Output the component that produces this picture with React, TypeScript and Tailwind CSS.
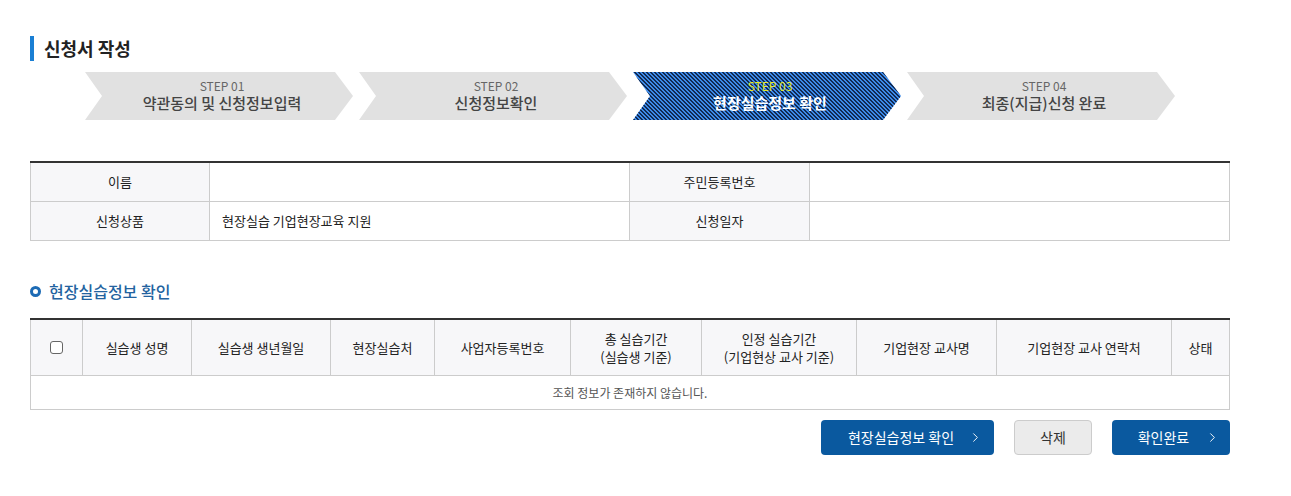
import { ChevronRight } from "lucide-react";

const steps = [
  { no: "STEP 01", label: "약관동의 및 신청정보입력", active: false },
  { no: "STEP 02", label: "신청정보확인", active: false },
  { no: "STEP 03", label: "현장실습정보 확인", active: true },
  { no: "STEP 04", label: "최종(지급)신청 완료", active: false },
];

const columns = [
  { w: "w-[52px]", label: null },
  { w: "w-[109px]", label: ["실습생 성명"] },
  { w: "w-[139px]", label: ["실습생 생년월일"] },
  { w: "w-[104px]", label: ["현장실습처"] },
  { w: "w-[136px]", label: ["사업자등록번호"] },
  { w: "w-[131px]", label: ["총 실습기간", "(실습생 기준)"] },
  { w: "w-[155px]", label: ["인정 실습기간", "(기업현상 교사 기준)"] },
  { w: "w-[140px]", label: ["기업현장 교사명"] },
  { w: "w-[175px]", label: ["기업현장 교사 연락처"] },
  { w: "flex-1", label: ["상태"] },
];

function Step({ no, label, active }: { no: string; label: string; active: boolean }) {
  // 화살표 모양은 clip-path 로 자른다, 활성 단계는 4px 타일 사선 무늬
  const bg = active
    ? "bg-[#3d8ae8] bg-[linear-gradient(45deg,#112a52_25%,transparent_25%,transparent_50%,#112a52_50%,#112a52_75%,transparent_75%)] bg-[length:4px_4px]"
    : "bg-[#e1e1e1]";
  return (
    <div
      className={`w-[268px] h-[48px] flex flex-col items-center justify-center pl-[6px] [clip-path:polygon(0_0,calc(100%-18px)_0,100%_50%,calc(100%-18px)_100%,0_100%,17px_50%)] ${bg}`}
    >
      <span className={`text-[12px] leading-[14px] ${active ? "text-[#e6ea2c]" : "text-[#666]"}`}>{no}</span>
      <span
        className={`text-[15px] leading-[20px] ${active ? "text-white font-bold" : "text-[#444] font-medium"}`}
      >
        {label}
      </span>
    </div>
  );
}

export default function App(): JSX.Element {
  return (
    <div className="w-[1291px] h-[496px] bg-white pl-[30px] pt-[36px] font-['Noto_Sans_CJK_KR','Noto_Sans',sans-serif] text-[#333]">
      <div className="flex items-center gap-[10px] h-[25px]">
        <span className="w-[4px] h-[25px] bg-[#1a7fd4]" />
        <h1 className="text-[18px] font-bold text-[#222] leading-[25px]">신청서 작성</h1>
      </div>

      <div className="flex gap-[6px] ml-[55px] mt-[11px]">
        {steps.map((s) => (
          <Step key={s.no} {...s} />
        ))}
      </div>

      <div className="w-[1200px] mt-[41px] border-t-2 border-[#333] text-[13px] text-[#222]">
        <div className="flex h-[39px] border-b border-[#ccc]">
          <div className="w-[180px] flex items-center justify-center bg-[#f7f7f9] border-l border-r border-[#ccc]">이름</div>
          <div className="w-[420px] border-r border-[#ccc]" />
          <div className="w-[180px] flex items-center justify-center bg-[#f7f7f9] border-r border-[#ccc]">주민등록번호</div>
          <div className="flex-1 border-r border-[#ccc]" />
        </div>
        <div className="flex h-[39px] border-b border-[#ccc]">
          <div className="w-[180px] flex items-center justify-center bg-[#f7f7f9] border-l border-r border-[#ccc]">신청상품</div>
          <div className="w-[420px] flex items-center pl-[12px] border-r border-[#ccc]">현장실습 기업현장교육 지원</div>
          <div className="w-[180px] flex items-center justify-center bg-[#f7f7f9] border-r border-[#ccc]">신청일자</div>
          <div className="flex-1 border-r border-[#ccc]" />
        </div>
      </div>

      <div className="flex items-center gap-[8px] mt-[39px] h-[22px]">
        <span className="w-[11px] h-[11px] rounded-full border-[3px] border-[#1d6bb5]" />
        <h2 className="text-[16px] font-medium text-[#23639f] leading-[22px]">현장실습정보 확인</h2>
      </div>

      <div className="w-[1200px] mt-[16px] border-t-2 border-[#333] text-[13px] text-[#222]">
        <div className="flex h-[56px] bg-[#f7f7f9] border-b border-[#ccc] border-l border-r">
          {columns.map((c, i) => (
            <div
              key={i}
              className={`${c.w} flex flex-col items-center justify-center leading-[18px] ${i < columns.length - 1 ? "border-r border-[#ccc]" : ""}`}
            >
              {c.label === null ? (
                <span className="w-[13px] h-[13px] rounded-[3px] border border-[#666] bg-white" />
              ) : (
                c.label.map((l) => <span key={l}>{l}</span>)
              )}
            </div>
          ))}
        </div>
        <div className="h-[34px] flex items-center justify-center border-b border-l border-r border-[#ccc] text-[12px] text-[#555]">
          조회 정보가 존재하지 않습니다.
        </div>
      </div>

      <div className="w-[1200px] flex justify-end gap-[20px] mt-[10px]">
        <button className="w-[173px] h-[35px] rounded-[4px] bg-[#0a599f] text-white text-[14px] flex items-center justify-center gap-[14px] pl-[16px]">
          <span>현장실습정보 확인</span>
          <ChevronRight size={15} strokeWidth={1.5} />
        </button>
        <button className="w-[78px] h-[35px] rounded-[4px] bg-[#ebebeb] border border-[#ccc] text-[#333] text-[14px]">
          삭제
        </button>
        <button className="w-[118px] h-[35px] rounded-[4px] bg-[#0a599f] text-white text-[14px] flex items-center justify-center gap-[16px] pl-[16px]">
          <span>확인완료</span>
          <ChevronRight size={15} strokeWidth={1.5} />
        </button>
      </div>
    </div>
  );
}
